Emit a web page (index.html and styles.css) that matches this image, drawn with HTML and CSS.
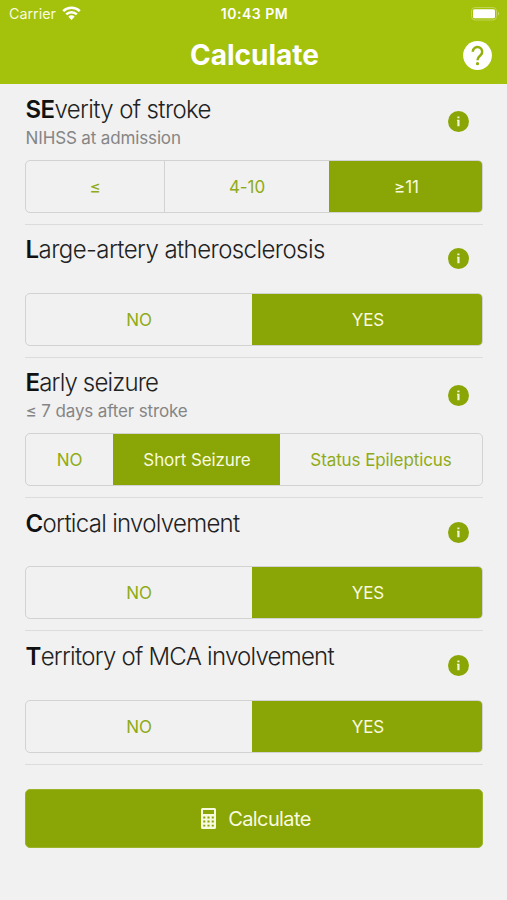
FILE: index.html
```html
<!DOCTYPE html>
<html lang="en">
<head>
<meta charset="utf-8">
<title>Calculate</title>
<link rel="stylesheet" href="styles.css">
</head>
<body>
<svg class="defs" width="0" height="0">
  <symbol id="info" viewBox="0 0 20 20"><circle cx="10" cy="10" r="10"/><path fill="#f1f4dc" d="M8.900 5.200h2v1.800h-2zM8.600 8.400h2.400v6.200H8.900V9.500h-.3z"/></symbol>
</svg>
<header class="header">
  <div class="status">
    <div class="carrier"><span>Carrier</span>
      <svg width="19" height="14" viewBox="0 0 19 14" fill="none" stroke="#fff" stroke-width="2.500"><path d="M1.200 5.100a11.800 11.800 0 0 1 16.600 0M4.200 8.400a7.500 7.500 0 0 1 10.600 0"/><path d="M9.500 13.900 6.300 10.700a4.500 4.500 0 0 1 6.400 0z" fill="#fff" stroke="none"/></svg>
    </div>
    <div class="time">10:43 PM</div>
    <svg class="battery" width="30" height="14" viewBox="0 0 30 14"><rect x="1.500" y=".5" width="25" height="12.500" rx="3.500" fill="none" stroke="#c1d455"/><rect x="3" y="2.200" width="22" height="9" rx="1.500" fill="#fff"/><path d="M28 5a2 2 0 0 1 0 3.600z" fill="#c9da6c"/></svg>
  </div>
  <div class="nav">
    <h1>Calculate</h1>
    <svg class="help" width="29" height="29" viewBox="0 0 29 29"><circle cx="14.500" cy="14.500" r="14.400" fill="#fff"/><path d="M9.800 10.700a4.700 4.700 0 1 1 7.900 3.400c-1.900 1.700-3.200 2.400-3.200 5.200" fill="none" stroke="#94b00c" stroke-width="2.500"/><circle cx="14.500" cy="22.700" r="1.600" fill="#94b00c"/></svg>
  </div>
</header>
<main>
  <section class="item first">
    <div class="head"><div><h2 class="t1"><b>SE</b>verity of stroke</h2><p>NIHSS at admission</p></div><svg class="info"><use href="#info"/></svg></div>
    <div class="group severity"><button>≤</button><button>4-10</button><button class="on">≥11</button></div>
  </section>
  <section class="item">
    <div class="head"><h2 class="t2"><b>L</b>arge-artery atherosclerosis</h2><svg class="info"><use href="#info"/></svg></div>
    <div class="group binary"><button>NO</button><button class="on">YES</button></div>
  </section>
  <section class="item tall">
    <div class="head"><div><h2 class="t3"><b>E</b>arly seizure</h2><p>≤ 7 days after stroke</p></div><svg class="info"><use href="#info"/></svg></div>
    <div class="group seizure"><button>NO</button><button class="on">Short Seizure</button><button>Status Epilepticus</button></div>
  </section>
  <section class="item">
    <div class="head"><h2 class="t4"><b>C</b>ortical involvement</h2><svg class="info"><use href="#info"/></svg></div>
    <div class="group binary"><button>NO</button><button class="on">YES</button></div>
  </section>
  <section class="item">
    <div class="head"><h2 class="t5"><b>T</b>erritory of MCA involvement</h2><svg class="info"><use href="#info"/></svg></div>
    <div class="group binary"><button>NO</button><button class="on">YES</button></div>
  </section>
  <button class="submit">
    <svg width="15" height="21" viewBox="0 0 15 21"><path fill="#f8fadf" fill-rule="evenodd" d="M1.500 0h12A1.500 1.500 0 0 1 15 1.500v18a1.500 1.500 0 0 1-1.500 1.500h-12A1.500 1.500 0 0 1 0 19.500v-18A1.500 1.500 0 0 1 1.500 0zM2 2v4h11V2zM2.200 8.500v1.900h2.100V8.500zm4.250 0v1.900h2.100V8.500zm4.250 0v1.900h2.100V8.500zM2.200 12.600v1.900h2.100v-1.900zm4.250 0v1.900h2.100v-1.900zm4.250 0v1.900h2.100v-1.900zM2.200 16.700v1.900h2.100v-1.900zm4.250 0v1.900h2.100v-1.900zm4.250 0v1.900h2.100v-1.900z"/></svg>
    <span>Calculate</span>
  </button>
</main>
</body>
</html>
```

FILE: styles.css
```css
* { box-sizing: border-box; }
body { margin: 0; height: 900px; background: #f1f1f1; color: #222; font-family: Inter, "Liberation Sans", sans-serif; overflow: hidden; }
h1, h2, p { margin: 0; }
.defs { display: block; height: 0; }
.header { height: 84px; background: #a4c10c; color: #fff; }
.status { height: 27px; display: grid; grid-template-columns: 1fr auto 1fr; align-items: center; padding: 0 7px 0 9px; line-height: 27px; }
.carrier { display: flex; align-items: center; gap: 6px; color: #f8fadf; font-size: 14.3px; }
.carrier svg { margin-bottom: 2px; }
.time { font-weight: 600; font-size: 14px; letter-spacing: .5px; }
.battery { justify-self: end; }
.nav { height: 56px; display: grid; grid-template-columns: 1fr auto 1fr; align-items: center; padding: 0 15px; }
.nav h1 { grid-column: 2; font-size: 28px; font-weight: 700; padding-left: 2px; }
.help { justify-self: end; }
main { padding: 1px 24px 0 25px; }
.item { height: 133.2px; border-bottom: 1px solid #dcdcdc; display: flex; flex-direction: column; justify-content: space-between; padding: 8.5px 0 11px; }
.first { height: 139.6px; padding-top: 8px; }
.tall { height: 140.5px; }
.head { display: flex; justify-content: space-between; align-items: flex-start; }
h2 { font-size: 24px; line-height: 34px; font-weight: 300; white-space: nowrap; padding-left: .6px; }
.t1 { letter-spacing: -.62px; }
.t2 { letter-spacing: -.58px; }
.t3 { letter-spacing: -.85px; }
.t4 { letter-spacing: -.7px; }
.t5 { letter-spacing: -.75px; }
h2 b { font-weight: 600; color: #111; }
.item p { font-size: 17px; line-height: 22px; color: #858585; letter-spacing: -.14px; padding-left: .6px; }
.first p { margin-top: -.5px; }
.info { width: 21px; height: 21px; margin: 15px 14.5px 0 0; fill: #8aa506; }
.first .info { margin-top: 18px; }
.tall .info { margin-top: 19px; }
.group { height: 53px; display: grid; border: 1px solid #d2d2d2; border-radius: 5px; overflow: hidden; flex: none; }
.severity { grid-template-columns: 138px 165px 1fr; }
.binary { grid-template-columns: 226px 1fr; }
.seizure { grid-template-columns: 87px 167px 1fr; }
.group button { border: 0; background: none; padding: 1px 0 0; font: 400 17px Inter, sans-serif; letter-spacing: -.1px; color: #8fab17; }
.group button + button { border-left: 1px solid #d2d2d2; }
.group .on { background: #8aa506; color: #f8fadf; border-color: #8aa506; margin: -1px 0; }
.group .on:last-child { margin-right: -1px; }
.group .on + button { border-left: 0; }
.submit { width: 100%; height: 59px; margin-top: 24px; display: flex; align-items: center; justify-content: center; gap: 12px; border: 1px solid #9ab328; border-radius: 5px; background: #8aa506; color: #f8fadf; font: 400 20px Inter, sans-serif; letter-spacing: -.6px; padding: 1px 0 0 4px; }
```
